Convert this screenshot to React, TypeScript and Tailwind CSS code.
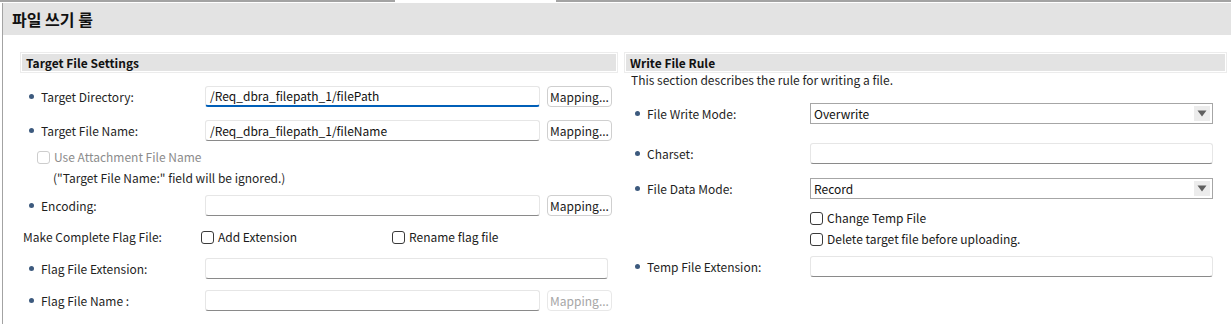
import React from "react";

// Bullet dot shown before required field labels
function Dot() {
  return <span className="inline-block w-[5px] h-[5px] rounded-full bg-[#3d5a7e] mr-[7px] shrink-0" />;
}

function TextInput({ value, focused = false, className = "" }: { value?: string; focused?: boolean; className?: string }) {
  return (
    <div
      className={`h-[21px] flex items-center px-[4px] bg-white rounded-[3px] border border-[#e6e6e6] ${
        focused ? "border-b-2 border-b-[#005fb8]" : "border-b-[#8a8a8a]"
      } ${className}`}
    >
      <span className="text-[12px] text-[#111] leading-none">{value}</span>
    </div>
  );
}

function MappingButton({ disabled = false }: { disabled?: boolean }) {
  return (
    <button
      className={`ml-[7px] w-[65px] h-[21px] rounded-[4px] border bg-white text-[12px] leading-none flex items-center justify-center ${
        disabled ? "border-[#e8e8e8] text-[#a6a6a6]" : "border-[#cfcfcf] text-[#1a1a1a]"
      }`}
    >
      Mapping...
    </button>
  );
}

function Checkbox({ label, disabled = false }: { label: string; disabled?: boolean }) {
  return (
    <label className="flex items-center">
      <span
        className={`w-[13px] h-[13px] rounded-[3px] border bg-white ${
          disabled ? "border-[#cdcdcd]" : "border-[#3a3a3a]"
        }`}
      />
      <span className={`ml-[4px] text-[12px] ${disabled ? "text-[#8c8c8c]" : "text-[#1a1a1a]"}`}>{label}</span>
    </label>
  );
}

function Select({ value }: { value: string }) {
  return (
    <div className="w-[403px] h-[21px] border border-[#a6a6a6] bg-white flex items-center pl-[3px] pr-[2px]">
      <span className="flex-1 text-[12px] text-[#111] leading-none">{value}</span>
      <span className="w-[16px] h-[15px] bg-[#ececec] flex items-center justify-center">
        <svg width="10" height="7" viewBox="0 0 10 7">
          <path d="M0.5 0.5h9L5 6.5z" fill="#5f5f5f" />
        </svg>
      </span>
    </div>
  );
}

function SectionHeader({ title }: { title: string }) {
  return (
    <div className="border border-[#ececec] p-[1px]">
      <div className="h-[17px] bg-[#e3e3e3] flex items-center pl-[4px] text-[12px] font-bold text-[#111]">
        {title}
      </div>
    </div>
  );
}

export default function App() {
  return (
    <div
      className="w-[1231px] h-[324px] bg-white overflow-hidden text-[#1f1f1f]"
      style={{ fontFamily: '"Noto Sans CJK KR", "Noto Sans", sans-serif' }}
    >
      {/* top edge */}
      <div className="flex h-[2px]">
        <div className="w-[395px] bg-[#a3a3a3]" />
        <div className="w-[161px] bg-white" />
        <div className="flex-1 bg-[#a3a3a3]" />
      </div>

      <div className="ml-[2px] border-l border-[#a3a3a3] h-full">
        {/* page title */}
        <div className="mt-[1px] h-[32px] bg-[#e3e3e3] flex items-center pl-[9px] text-[16px] font-bold text-[#111]">
          파일 쓰기 룰
        </div>

        <div className="flex pt-[17px] pl-[17px]">
          {/* Target File Settings */}
          <div className="w-[598px] text-[12px]">
            <SectionHeader title="Target File Settings" />

            <div className="mt-[13px] h-[21px] flex items-center">
              <div className="w-[185px] flex items-center pl-[9px]">
                <Dot />
                <span>Target Directory:</span>
              </div>
              <TextInput value="/Req_dbra_filepath_1/filePath" focused className="w-[335px]" />
              <MappingButton />
            </div>

            <div className="mt-[13px] h-[21px] flex items-center">
              <div className="w-[185px] flex items-center pl-[9px]">
                <Dot />
                <span>Target File Name:</span>
              </div>
              <TextInput value="/Req_dbra_filepath_1/fileName" className="w-[335px]" />
              <MappingButton />
            </div>

            <div className="mt-[7px] h-[18px] flex items-center pl-[17px]">
              <Checkbox label="Use Attachment File Name" disabled />
            </div>
            <div className="mt-[4px] h-[16px] flex items-center pl-[33px]">
              ("Target File Name:" field will be ignored.)
            </div>

            <div className="mt-[9px] h-[21px] flex items-center">
              <div className="w-[185px] flex items-center pl-[9px]">
                <Dot />
                <span>Encoding:</span>
              </div>
              <TextInput className="w-[335px]" />
              <MappingButton />
            </div>

            <div className="mt-[12px] h-[18px] flex items-center">
              <div className="w-[181px] pl-[3px]">Make Complete Flag File:</div>
              <div className="w-[191px]">
                <Checkbox label="Add Extension" />
              </div>
              <Checkbox label="Rename flag file" />
            </div>

            <div className="mt-[12px] h-[21px] flex items-center">
              <div className="w-[185px] flex items-center pl-[9px]">
                <Dot />
                <span>Flag File Extension:</span>
              </div>
              <TextInput className="w-[403px]" />
            </div>

            <div className="mt-[11px] h-[21px] flex items-center">
              <div className="w-[185px] flex items-center pl-[9px]">
                <Dot />
                <span>Flag File Name :</span>
              </div>
              <TextInput className="w-[335px]" />
              <MappingButton disabled />
            </div>
          </div>

          {/* Write File Rule */}
          <div className="ml-[6px] w-[603px] text-[12px]">
            <SectionHeader title="Write File Rule" />
            <div className="h-[14px] flex items-center pl-[7px]">This section describes the rule for writing a file.</div>

            <div className="mt-[16px] h-[21px] flex items-center">
              <div className="w-[186px] flex items-center pl-[11px]">
                <Dot />
                <span>File Write Mode:</span>
              </div>
              <Select value="Overwrite" />
            </div>

            <div className="mt-[19px] h-[21px] flex items-center">
              <div className="w-[186px] flex items-center pl-[11px]">
                <Dot />
                <span>Charset:</span>
              </div>
              <TextInput className="w-[403px]" />
            </div>

            <div className="mt-[14px] h-[21px] flex items-center">
              <div className="w-[186px] flex items-center pl-[11px]">
                <Dot />
                <span>File Data Mode:</span>
              </div>
              <Select value="Record" />
            </div>

            <div className="mt-[10px] h-[18px] flex items-center pl-[186px]">
              <Checkbox label="Change Temp File" />
            </div>
            <div className="mt-[3px] h-[18px] flex items-center pl-[186px]">
              <Checkbox label="Delete target file before uploading." />
            </div>

            <div className="mt-[8px] h-[21px] flex items-center">
              <div className="w-[186px] flex items-center pl-[11px]">
                <Dot />
                <span>Temp File Extension:</span>
              </div>
              <TextInput className="w-[403px]" />
            </div>
          </div>
        </div>
      </div>
    </div>
  );
}
